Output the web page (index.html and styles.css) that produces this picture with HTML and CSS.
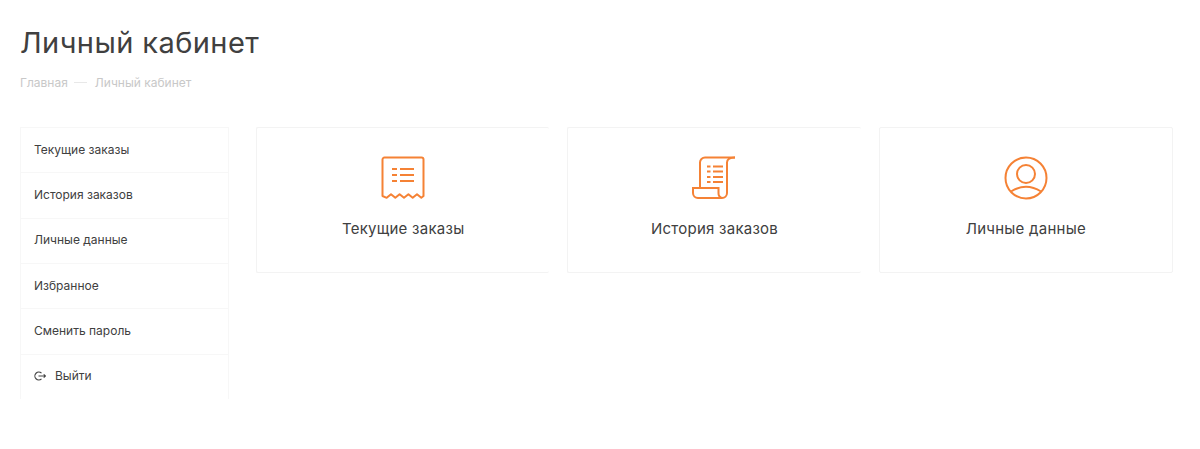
FILE: index.html
```html
<!DOCTYPE html>
<html lang="ru">
<head>
  <meta charset="UTF-8" />
  <meta name="viewport" content="width=device-width, initial-scale=1.0"/>
  <title>Личный кабинет</title>
  <link rel="stylesheet" href="styles.css">
</head>
<body>
  <h1>Личный кабинет</h1>

  <nav class="breadcrumbs">
    <a href="#">Главная</a>
    <span class="breadcrumbs-dash"></span>
    <a href="#">Личный кабинет</a>
  </nav>

  <div class="cabinet">
    <ul class="side-menu">
      <li><a href="#">Текущие заказы</a></li>
      <li><a href="#">История заказов</a></li>
      <li><a href="#">Личные данные</a></li>
      <li><a href="#">Избранное</a></li>
      <li><a href="#">Сменить пароль</a></li>
      <li class="side-menu-last">
        <a href="#">
          <svg class="logout-icon" viewBox="0 0 12 10" width="12" height="10" fill="none" stroke="#444" stroke-width="1.1">
            <path d="M7.5 2.2A3.9 3.9 0 1 0 7.5 7.8"/>
            <path d="M4.5 5H11.5M9.7 3.3 11.5 5 9.7 6.700"/>
          </svg>
          Выйти
        </a>
      </li>
    </ul>

    <div class="cards">
      <a class="card card-open" href="#">
        <svg class="card-icon" viewBox="0 0 44 44" fill="none" stroke="#f58235" stroke-width="2">
          <path d="M1.5 40V3.5a2 2 0 0 1 2-2h37a2 2 0 0 1 2 2V40l-2.200 1.800-4.300-3.600-4.300 3.600-4.300-3.600-4.400 3.600-4.400-3.600-4.300 3.600-4.300-3.600-4.300 3.600z" stroke-linejoin="round"/>
          <path d="M11 13h5M19 13h14M11 19h5M19 19h14M11 25h5M19 25h14"/>
        </svg>
        <span>Текущие заказы</span>
      </a>

      <a class="card card-open" href="#">
        <svg class="card-icon" viewBox="0 0 44 44" fill="none" stroke="#f58235" stroke-width="2">
          <path d="M43 1.5H13a5 5 0 0 0-5 5V32"/>
          <path d="M43 1.5c-5 0-8 1.5-8 5V37a5 5 0 0 1-5 5H6a5 5 0 0 1-5-5v-5h25.5v5a5 5 0 0 0 3.500 5"/>
          <path d="M15 10.5h3.500M21 10.5h10M15 15.5h3.500M21 15.5h10M15 21h3.500M21 21h10M15 26h3.500M21 26h10"/>
        </svg>
        <span>История заказов</span>
      </a>

      <a class="card" href="#">
        <svg class="card-icon" viewBox="0 0 44 44" fill="none" stroke="#f58235" stroke-width="2">
          <circle cx="22" cy="22" r="20.5"/>
          <circle cx="22" cy="18" r="9"/>
          <path d="M7 35.5Q22 26 37 35.5"/>
        </svg>
        <span>Личные данные</span>
      </a>
    </div>
  </div>
</body>
</html>
```

FILE: styles.css
```css
* {
  margin: 0;
  padding: 0;
  box-sizing: border-box;
}

body {
  font-family: 'Inter', 'Open Sans', sans-serif;
  background-color: #ffffff;
  color: #404040;
  padding: 25px 27px 0 20px;
}

a {
  color: inherit;
  text-decoration: none;
}

h1 {
  font-size: 29px;
  font-weight: 400;
  line-height: 36px;
  letter-spacing: 0.42px;
}

.breadcrumbs {
  display: flex;
  align-items: center;
  margin-top: 12px;
  height: 18px;
  font-size: 12px;
  color: #c8c8c8;
}

.breadcrumbs-dash {
  width: 13px;
  height: 1px;
  margin: 0 8px 0 6px;
  background-color: #e8e8e8;
}

.cabinet {
  display: flex;
  align-items: flex-start;
  gap: 27px;
  margin-top: 36px;
}

.side-menu {
  flex: 0 0 209px;
  list-style: none;
  font-size: 12px;
}

.side-menu li {
  height: 45.333px;
  border: 1px solid #f7f7f7;
  border-bottom: none;
}

.side-menu a {
  display: flex;
  align-items: center;
  height: 100%;
  padding: 0 0 2px 13px;
}

.logout-icon {
  margin-right: 9px;
}

.cards {
  flex: 1;
  display: flex;
  gap: 18px;
}

.card {
  flex: 1;
  display: flex;
  flex-direction: column;
  align-items: center;
  height: 146px;
  padding-top: 28px;
  border: 1px solid #f3f3f3;
  border-radius: 2px;
  font-size: 15px;
  letter-spacing: 0.25px;
}

.card-open {
  border-right: none;
}

.card-icon {
  width: 44px;
  height: 44px;
  margin-bottom: 19px;
}
```
